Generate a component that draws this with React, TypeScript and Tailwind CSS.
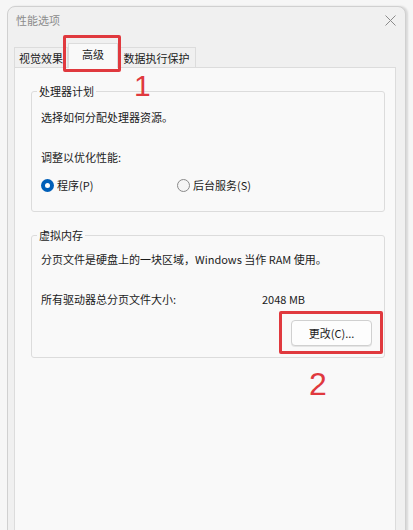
export default function App() {
  return (
    <div className="relative w-[413px] h-[530px] overflow-hidden bg-[#f6f6f6] font-['Noto_Sans_CJK_SC','Noto_Sans',sans-serif] text-[11px] leading-[16px] text-[#1b1b1b]">
      <div className="ml-[7px] mt-[6px] w-[399px] h-[540px] bg-[#f0f0f0] border border-[#d0d0d0] rounded-t-[8px] shadow-[2px_0_2px_rgba(0,0,0,0.12)] flex flex-col">
        <div className="h-[36px] shrink-0 flex items-start justify-between pl-[8px] pr-[9px] pt-[6px]">
          <span className="text-[#8c8c8c] text-[11px] leading-[14px]">性能选项</span>
          <svg width="11" height="11" viewBox="0 0 11 11" className="mt-[2px]">
            <path d="M0.5 0.5 L10.5 10.5 M10.5 0.5 L0.5 10.5" stroke="#8a8a8a" strokeWidth="1" />
          </svg>
        </div>
        <div className="flex items-end pl-[6px] h-[24px] shrink-0 relative z-10">
          <div className="w-[54px] h-[20px] border border-b-0 border-[#dcdcdc] bg-[#f0f0f0] flex items-center justify-center">视觉效果</div>
          <div className="w-[50px] h-[25px] -mb-[1px] border border-b-0 border-[#dcdcdc] bg-[#f9f9f9] flex items-start justify-center pt-[2px]">高级</div>
          <div className="w-[78px] h-[20px] border border-b-0 border-l-0 border-[#dcdcdc] bg-[#f0f0f0] flex items-center justify-center">数据执行保护</div>
        </div>
        <div className="ml-[6px] w-[382px] flex-1 border border-[#dcdcdc] bg-[#f9f9f9] pt-[23px]">
          <div className="relative ml-[16px] w-[354px] border border-[#dcdcdc] rounded-[3px] pl-[9px] pt-[17px] pb-[18px]">
            <span className="absolute -top-[9px] left-[5px] px-[2px] bg-[#f9f9f9]">处理器计划</span>
            <div>选择如何分配处理器资源。</div>
            <div className="mt-[24px]">调整以优化性能:</div>
            <div className="mt-[12px] flex items-center h-[16px]">
              <div className="w-[136px] flex items-center">
                <span className="w-[13px] h-[13px] rounded-full bg-[#005fb8] flex items-center justify-center">
                  <span className="w-[5px] h-[5px] rounded-full bg-white" />
                </span>
                <span className="ml-[3px]">程序(P)</span>
              </div>
              <div className="flex items-center">
                <span className="w-[13px] h-[13px] rounded-full border border-[#8a8a8a] bg-[#f5f5f5]" />
                <span className="ml-[3px]">后台服务(S)</span>
              </div>
            </div>
          </div>
          <div className="relative ml-[16px] mt-[23px] w-[354px] border border-[#dcdcdc] rounded-[3px] pl-[9px] pt-[15px] pb-[11px]">
            <span className="absolute -top-[9px] left-[5px] px-[2px] bg-[#f9f9f9]">虚拟内存</span>
            <div>分页文件是硬盘上的一块区域，Windows 当作 RAM 使用。</div>
            <div className="mt-[24px] flex">
              <span className="w-[221px]">所有驱动器总分页文件大小:</span>
              <span>2048 MB</span>
            </div>
            <div className="mt-[13px] flex justify-end pr-[12px]">
              <div className="w-[81px] h-[26px] rounded-[4px] border border-[#d0d0d0] bg-[#fdfdfd] flex items-center justify-center shadow-[0_1px_0_rgba(0,0,0,0.08)]">更改(C)...</div>
            </div>
          </div>
        </div>
      </div>
      <div className="absolute left-[63px] top-[35px] w-[58px] h-[37px] border-[3px] border-[#e0393e] rounded-[2px] z-20" />
      <div className="absolute left-[134px] top-[68px] text-[30px] leading-[36px] text-[#e0393e] font-['Liberation_Sans',sans-serif] z-20">1</div>
      <div className="absolute left-[279px] top-[311px] w-[104px] h-[43px] border-[3px] border-[#e0393e] rounded-[2px] z-20" />
      <div className="absolute left-[309px] top-[365px] text-[32px] leading-[38px] text-[#e0393e] font-['Liberation_Sans',sans-serif] z-20">2</div>
    </div>
  );
}
